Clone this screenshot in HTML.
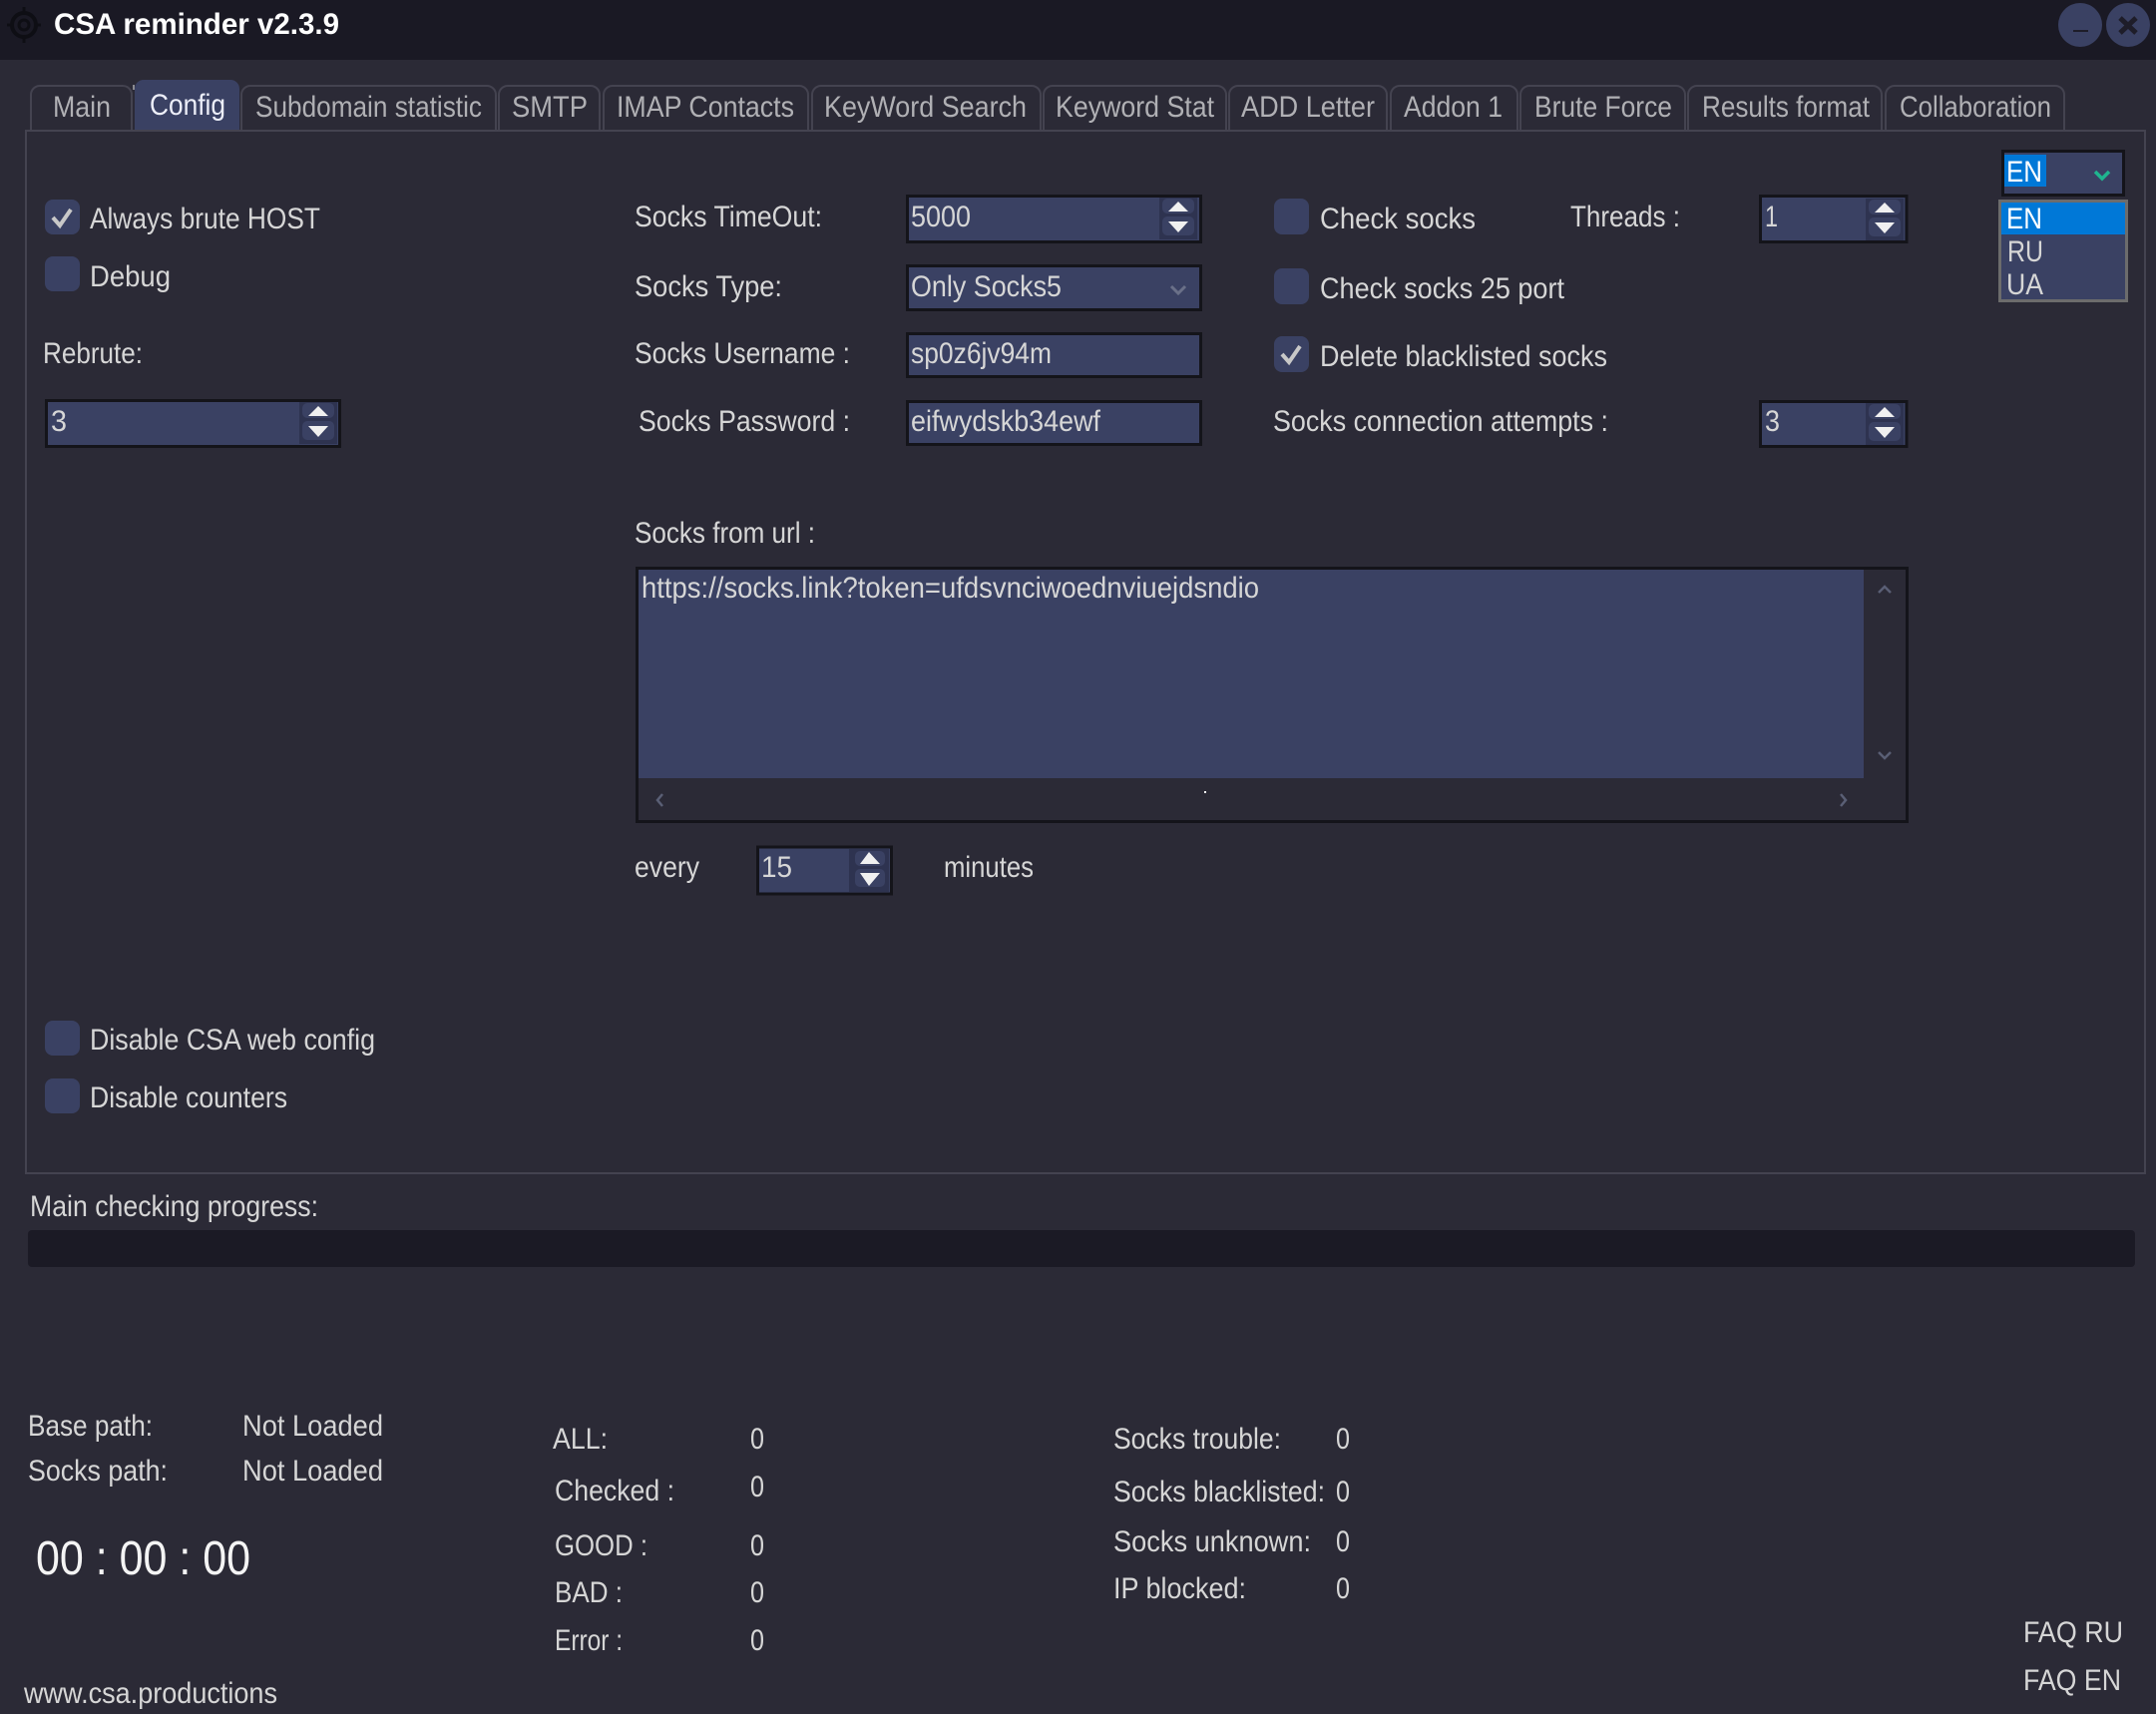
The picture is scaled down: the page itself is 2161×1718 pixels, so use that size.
<!DOCTYPE html>
<html><head><meta charset="utf-8"><title>CSA reminder v2.3.9</title>
<style>
html,body{margin:0;padding:0;background:#2b2a36;width:2161px;height:1718px;overflow:hidden}
svg{display:block}
text{font-family:"Liberation Sans",sans-serif;font-size:30px;fill:#d6d6d6}
.tab{font-size:30px;fill:#b0b0b4}
.inp{fill:#3a4163;stroke:#14141a;stroke-width:3}
.cb{fill:#3a4163}
.ck{fill:none;stroke:#c8c8c8;stroke-width:4}
.t{fill:#2b2a36;stroke:#444350;stroke-width:2}
</style></head><body>
<svg xmlns="http://www.w3.org/2000/svg" width="2161" height="1718" viewBox="0 0 2161 1718">
<defs>
<g id="sp">
<rect x="0" y="3" width="38" height="42" fill="#2e3350"/>
<rect x="3" y="4" width="32" height="15" rx="5" fill="#3a4163"/>
<rect x="3" y="22" width="32" height="19" rx="5" fill="#3a4163"/>
<path d="M9 17H29L19 7Z M9 27H29L19 38Z" fill="#f0f0f0"/>
</g>
</defs>
<rect width="2161" height="1718" fill="#2b2a36"/>
<!-- title bar -->
<rect width="2161" height="60" fill="#1a1924"/>
<g fill="none" stroke="#0e0e14">
<circle cx="24" cy="25" r="12" stroke-width="4"/>
<circle cx="24" cy="25" r="5" stroke-width="3"/>
<path d="M24 7V15M24 35V43M7 25H14M34 25H41" stroke-width="3"/>
</g>
<text x="54" y="34" textLength="286" lengthAdjust="spacingAndGlyphs" style="font-size:30px;font-weight:bold;fill:#fff">CSA reminder v2.3.9</text>
<circle cx="2085" cy="25" r="22" fill="#3a4163"/>
<circle cx="2133" cy="25" r="22" fill="#3a4163"/>
<path d="M2078 31H2093" stroke="#1e1d29" stroke-width="2"/>
<path d="M2125 18L2141 33M2141 18L2125 33" stroke="#1e1d29" stroke-width="5"/>
<!-- tabs -->
<rect class="t" x="31" y="86" width="101" height="70" rx="9"/>
<rect class="t" x="242" y="86" width="255" height="70" rx="9"/>
<rect class="t" x="500" y="86" width="101" height="70" rx="9"/>
<rect class="t" x="605" y="86" width="205" height="70" rx="9"/>
<rect class="t" x="814" y="86" width="229" height="70" rx="9"/>
<rect class="t" x="1046" y="86" width="183" height="70" rx="9"/>
<rect class="t" x="1232" y="86" width="158" height="70" rx="9"/>
<rect class="t" x="1394" y="86" width="127" height="70" rx="9"/>
<rect class="t" x="1524" y="86" width="165" height="70" rx="9"/>
<rect class="t" x="1692" y="86" width="194" height="70" rx="9"/>
<rect class="t" x="1890" y="86" width="179" height="70" rx="9"/>
<rect x="135" y="80" width="105" height="70" rx="9" fill="#3a4163"/>
<rect x="133" y="85" width="2" height="5" fill="#8a8a90"/>
<!-- panel -->
<rect x="26" y="131" width="2124" height="1045" fill="#2b2a36" stroke="#444350" stroke-width="2"/>
<rect x="136" y="100" width="103" height="30" fill="#3a4163"/>
<text class="tab" x="53" y="117" textLength="58" lengthAdjust="spacingAndGlyphs">Main</text>
<text class="tab" x="150" y="115" textLength="76" lengthAdjust="spacingAndGlyphs" style="fill:#eceef8">Config</text>
<text class="tab" x="256" y="117" textLength="227" lengthAdjust="spacingAndGlyphs">Subdomain statistic</text>
<text class="tab" x="513" y="117" textLength="76" lengthAdjust="spacingAndGlyphs">SMTP</text>
<text class="tab" x="618" y="117" textLength="178" lengthAdjust="spacingAndGlyphs">IMAP Contacts</text>
<text class="tab" x="826" y="117" textLength="203" lengthAdjust="spacingAndGlyphs">KeyWord Search</text>
<text class="tab" x="1058" y="117" textLength="159" lengthAdjust="spacingAndGlyphs">Keyword Stat</text>
<text class="tab" x="1244" y="117" textLength="134" lengthAdjust="spacingAndGlyphs">ADD Letter</text>
<text class="tab" x="1407" y="117" textLength="99" lengthAdjust="spacingAndGlyphs">Addon 1</text>
<text class="tab" x="1538" y="117" textLength="138" lengthAdjust="spacingAndGlyphs">Brute Force</text>
<text class="tab" x="1706" y="117" textLength="168" lengthAdjust="spacingAndGlyphs">Results format</text>
<text class="tab" x="1904" y="117" textLength="152" lengthAdjust="spacingAndGlyphs">Collaboration</text>
<!-- left column -->
<rect class="cb" x="45" y="200" width="35" height="35" rx="8"/>
<path class="ck" d="M53 218L60 226L71 210"/>
<text x="90" y="229" textLength="231" lengthAdjust="spacingAndGlyphs">Always brute HOST</text>
<rect class="cb" x="45" y="257" width="35" height="35" rx="8"/>
<text x="90" y="287" textLength="81" lengthAdjust="spacingAndGlyphs">Debug</text>
<text x="43" y="364" textLength="100" lengthAdjust="spacingAndGlyphs">Rebrute:</text>
<rect class="inp" x="46.5" y="401.5" width="294" height="46"/>
<use href="#sp" x="300" y="400"/>
<text x="51" y="432" textLength="16" lengthAdjust="spacingAndGlyphs">3</text>
<rect class="cb" x="45" y="1023" width="35" height="35" rx="8"/>
<text x="90" y="1052" textLength="286" lengthAdjust="spacingAndGlyphs">Disable CSA web config</text>
<rect class="cb" x="45" y="1081" width="35" height="35" rx="8"/>
<text x="90" y="1110" textLength="198" lengthAdjust="spacingAndGlyphs">Disable counters</text>
<!-- socks labels -->
<text x="636" y="227" textLength="188" lengthAdjust="spacingAndGlyphs">Socks TimeOut:</text>
<text x="636" y="297" textLength="148" lengthAdjust="spacingAndGlyphs">Socks Type:</text>
<text x="636" y="364" textLength="216" lengthAdjust="spacingAndGlyphs">Socks Username :</text>
<text x="640" y="432" textLength="212" lengthAdjust="spacingAndGlyphs">Socks Password :</text>
<!-- socks inputs -->
<rect class="inp" x="909.5" y="196.5" width="294" height="46"/>
<use href="#sp" x="1162" y="195"/>
<text x="913" y="227" textLength="60" lengthAdjust="spacingAndGlyphs">5000</text>
<rect class="inp" x="909.5" y="266.5" width="294" height="44"/>
<text x="913" y="297" textLength="151" lengthAdjust="spacingAndGlyphs">Only Socks5</text>
<path d="M1174 287L1181 294L1188 287" fill="none" stroke="#6a7088" stroke-width="3"/>
<rect class="inp" x="909.5" y="334.5" width="294" height="43"/>
<text x="913" y="364" textLength="141" lengthAdjust="spacingAndGlyphs">sp0z6jv94m</text>
<rect class="inp" x="909.5" y="402.5" width="294" height="43"/>
<text x="913" y="432" textLength="190" lengthAdjust="spacingAndGlyphs">eifwydskb34ewf</text>
<!-- third column -->
<rect class="cb" x="1277" y="199" width="35" height="36" rx="8"/>
<text x="1323" y="229" textLength="156" lengthAdjust="spacingAndGlyphs">Check socks</text>
<rect class="cb" x="1277" y="269" width="35" height="36" rx="8"/>
<text x="1323" y="299" textLength="245" lengthAdjust="spacingAndGlyphs">Check socks 25 port</text>
<rect class="cb" x="1277" y="337" width="35" height="36" rx="8"/>
<path class="ck" d="M1285 355L1292 363L1303 347"/>
<text x="1323" y="367" textLength="288" lengthAdjust="spacingAndGlyphs">Delete blacklisted socks</text>
<text x="1574" y="227" textLength="110" lengthAdjust="spacingAndGlyphs">Threads :</text>
<rect class="inp" x="1764.5" y="196.5" width="146.5" height="46"/>
<use href="#sp" x="1870" y="196"/>
<text x="1769" y="227" textLength="13" lengthAdjust="spacingAndGlyphs">1</text>
<text x="1276" y="432" textLength="336" lengthAdjust="spacingAndGlyphs">Socks connection attempts :</text>
<rect class="inp" x="1764.5" y="402.5" width="146.5" height="45"/>
<use href="#sp" x="1870" y="401"/>
<text x="1769" y="432" textLength="15" lengthAdjust="spacingAndGlyphs">3</text>
<!-- language combo -->
<rect class="inp" x="2007.5" y="151.5" width="121" height="44"/>
<rect x="2009" y="155" width="42" height="32" fill="#0078d7"/>
<text x="2011" y="182" textLength="36" lengthAdjust="spacingAndGlyphs" style="fill:#fff">EN</text>
<path d="M2100 172L2107 179L2114 172" fill="none" stroke="#1fb58f" stroke-width="3.5"/>
<rect x="2004.5" y="201.5" width="127" height="100" fill="#3a4163" stroke="#6c6c6c" stroke-width="3"/>
<rect x="2006" y="203" width="124" height="32" fill="#0078d7"/>
<text x="2011" y="229" textLength="36" lengthAdjust="spacingAndGlyphs" style="fill:#fff">EN</text>
<text x="2012" y="262" textLength="36" lengthAdjust="spacingAndGlyphs">RU</text>
<text x="2011" y="295" textLength="37" lengthAdjust="spacingAndGlyphs">UA</text>
<!-- url box -->
<text x="636" y="544" textLength="181" lengthAdjust="spacingAndGlyphs">Socks from url :</text>
<rect x="638.5" y="569.5" width="1273" height="254" fill="#2b2a36" stroke="#14141a" stroke-width="3"/>
<rect x="640" y="571" width="1228" height="209" fill="#3a4163"/>
<text x="643" y="599" textLength="619" lengthAdjust="spacingAndGlyphs">https://socks.link?token=ufdsvnciwoednviuejdsndio</text>
<path d="M1883 594L1889 588L1895 594M1883 754L1889 760L1895 754M664 796L659 802L664 808M1845 796L1850 802L1845 808" fill="none" stroke="#5a5f75" stroke-width="2.5"/>
<rect x="1207" y="793" width="2" height="2" fill="#fff"/>
<!-- every -->
<text x="636" y="879" textLength="65" lengthAdjust="spacingAndGlyphs">every</text>
<rect class="inp" x="759.5" y="849" width="134" height="47"/>
<rect x="851" y="851" width="40" height="43" fill="#2e3350"/>
<rect x="857" y="853" width="30" height="15" rx="5" fill="#3a4163"/>
<rect x="857" y="871" width="30" height="18" rx="5" fill="#3a4163"/>
<path d="M862 866H882L871 854Z M862 875H882L871 888Z" fill="#f0f0f0"/>
<text x="763" y="879" textLength="31" lengthAdjust="spacingAndGlyphs">15</text>
<text x="946" y="879" textLength="90" lengthAdjust="spacingAndGlyphs">minutes</text>
<!-- progress -->
<text x="30" y="1219" textLength="289" lengthAdjust="spacingAndGlyphs">Main checking progress:</text>
<rect x="28" y="1233" width="2112" height="37" rx="4" fill="#1b1a25"/>
<!-- bottom left -->
<text x="28" y="1439" textLength="125" lengthAdjust="spacingAndGlyphs">Base path:</text>
<text x="243" y="1439" textLength="141" lengthAdjust="spacingAndGlyphs">Not Loaded</text>
<text x="28" y="1484" textLength="140" lengthAdjust="spacingAndGlyphs">Socks path:</text>
<text x="243" y="1484" textLength="141" lengthAdjust="spacingAndGlyphs">Not Loaded</text>
<text x="36" y="1578" textLength="215" lengthAdjust="spacingAndGlyphs" style="font-size:48px;fill:#f4f4f4">00 : 00 : 00</text>
<text x="24" y="1707" textLength="254" lengthAdjust="spacingAndGlyphs">www.csa.productions</text>
<!-- counters -->
<text x="554" y="1452" textLength="55" lengthAdjust="spacingAndGlyphs">ALL:</text>
<text x="752" y="1452" textLength="14" lengthAdjust="spacingAndGlyphs">0</text>
<text x="556" y="1504" textLength="120" lengthAdjust="spacingAndGlyphs">Checked :</text>
<text x="752" y="1500" textLength="14" lengthAdjust="spacingAndGlyphs">0</text>
<text x="556" y="1559" textLength="93" lengthAdjust="spacingAndGlyphs">GOOD :</text>
<text x="752" y="1559" textLength="14" lengthAdjust="spacingAndGlyphs">0</text>
<text x="556" y="1606" textLength="68" lengthAdjust="spacingAndGlyphs">BAD :</text>
<text x="752" y="1606" textLength="14" lengthAdjust="spacingAndGlyphs">0</text>
<text x="556" y="1654" textLength="68" lengthAdjust="spacingAndGlyphs">Error :</text>
<text x="752" y="1654" textLength="14" lengthAdjust="spacingAndGlyphs">0</text>
<text x="1116" y="1452" textLength="168" lengthAdjust="spacingAndGlyphs">Socks trouble:</text>
<text x="1339" y="1452" textLength="14" lengthAdjust="spacingAndGlyphs">0</text>
<text x="1116" y="1505" textLength="212" lengthAdjust="spacingAndGlyphs">Socks blacklisted:</text>
<text x="1339" y="1505" textLength="14" lengthAdjust="spacingAndGlyphs">0</text>
<text x="1116" y="1555" textLength="198" lengthAdjust="spacingAndGlyphs">Socks unknown:</text>
<text x="1339" y="1555" textLength="14" lengthAdjust="spacingAndGlyphs">0</text>
<text x="1116" y="1602" textLength="133" lengthAdjust="spacingAndGlyphs">IP blocked:</text>
<text x="1339" y="1602" textLength="14" lengthAdjust="spacingAndGlyphs">0</text>
<text x="2028" y="1646" textLength="100" lengthAdjust="spacingAndGlyphs">FAQ RU</text>
<text x="2028" y="1694" textLength="98" lengthAdjust="spacingAndGlyphs">FAQ EN</text>
</svg>
</body></html>
